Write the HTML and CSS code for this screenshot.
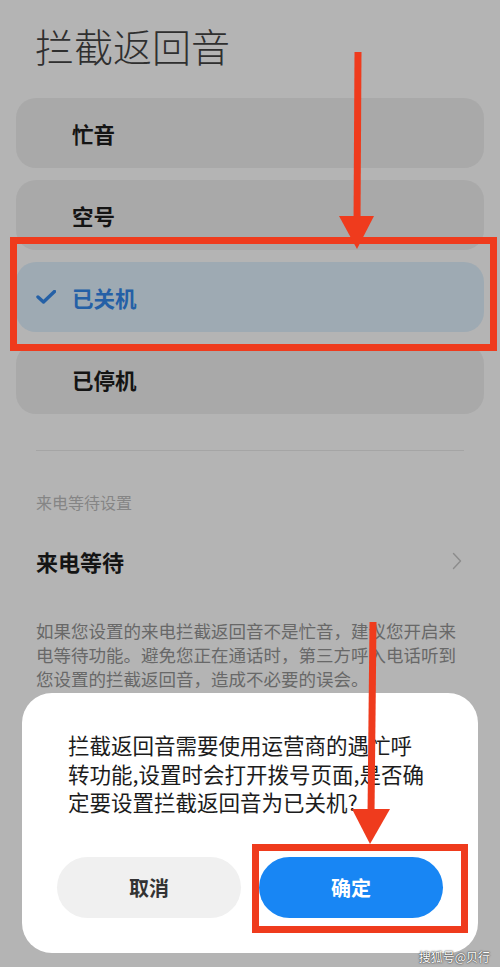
FILE: index.html
```html
<!DOCTYPE html>
<html lang="zh-CN">
<head>
    <meta charset="UTF-8">
    <meta name="viewport" content="width=device-width, initial-scale=1.0">
    <title>拦截返回音</title>
    <link rel="stylesheet" href="styles.css">
</head>
<body>
    <div class="screen">
        <h1 class="title">拦截返回音</h1>

        <ul class="options">
            <li class="option">
                <span class="check"></span>
                <span class="option-name">忙音</span>
            </li>
            <li class="option">
                <span class="check"></span>
                <span class="option-name">空号</span>
            </li>
            <li class="option selected">
                <span class="check">
                    <svg width="20" height="14" viewBox="0 0 20 14">
                        <path d="M2 7 L7.5 12 L18.5 1.5" fill="none" stroke="#2460a6" stroke-width="3.4" stroke-linecap="round" stroke-linejoin="round"/>
                    </svg>
                </span>
                <span class="option-name">已关机</span>
            </li>
            <li class="option">
                <span class="check"></span>
                <span class="option-name">已停机</span>
            </li>
        </ul>

        <div class="divider"></div>

        <div class="section-label">来电等待设置</div>
        <div class="setting-row">
            <span>来电等待</span>
            <svg class="chevron" width="10" height="18" viewBox="0 0 10 18">
                <path d="M1.5 1.5 L8.5 9 L1.5 16.5" fill="none" stroke="#8c8c8c" stroke-width="1.4" stroke-linecap="round" stroke-linejoin="round"/>
            </svg>
        </div>
        <p class="hint">如果您设置的来电拦截返回音不是忙音，建议您开启来电等待功能。避免您正在通话时，第三方呼入电话听到您设置的拦截返回音，造成不必要的误会。</p>

        <!-- confirm dialog -->
        <div class="dialog">
            <p class="dialog-text">拦截返回音需要使用运营商的遇忙呼转功能,设置时会打开拨号页面,是否确定要设置拦截返回音为已关机?</p>
            <div class="dialog-buttons">
                <button class="btn btn-cancel">取消</button>
                <button class="btn btn-ok">确定</button>
            </div>
        </div>

        <!-- red markers on top -->
        <svg class="marks" width="500" height="967" viewBox="0 0 500 967">
            <g fill="none" stroke="#ef3b1d" stroke-width="7">
                <rect x="13.5" y="240.5" width="480" height="107"/>
                <rect x="255.5" y="847.5" width="209" height="82"/>
                <line x1="358" y1="52" x2="357" y2="222"/>
                <line x1="373" y1="622" x2="371" y2="815"/>
            </g>
            <g fill="#ef3b1d">
                <polygon points="339,216 374,216 357,249"/>
                <polygon points="352,809 390,809 370,844"/>
            </g>
        </svg>

        <div class="watermark">搜狐号@贝行</div>
    </div>
</body>
</html>
```

FILE: styles.css
```css
body {
    margin: 0;
    padding: 0;
    background-color: #b4b4b4;
    font-family: 'Noto Sans CJK SC', 'Noto Sans', sans-serif;
}
.screen {
    position: relative;
    width: 500px;
    height: 967px;
    overflow: hidden;
    padding: 26px 16px 0;
    box-sizing: border-box;
}
.title {
    margin: 0 0 0 19px;
    font-size: 39px;
    line-height: 39px;
    font-weight: 300;
    color: #2f2f2f;
}
.options {
    list-style: none;
    margin: 33px 0 0;
    padding: 0;
}
.option {
    display: flex;
    align-items: center;
    height: 70px;
    margin-bottom: 12px;
    padding-left: 20px;
    border-radius: 20px;
    background-color: #a9a9a9;
    font-size: 21.5px;
    font-weight: 700;
    color: #141414;
}
.option.selected {
    background-color: #9eaab3;
    color: #2460a6;
}
.check {
    display: flex;
    width: 20px;
    margin-right: 16px;
}
.divider {
    height: 1px;
    margin: 36px 20px 0;
    background-color: #a5a5a5;
}
.section-label {
    margin: 40px 20px 0;
    font-size: 16px;
    line-height: 22px;
    color: #858585;
}
.setting-row {
    display: flex;
    align-items: center;
    justify-content: space-between;
    height: 30px;
    margin: 33px 20px 0;
    font-size: 22px;
    font-weight: 700;
    color: #141414;
}
.chevron {
    margin-right: 2px;
}
.hint {
    margin: 43px 20px 0;
    font-size: 17.5px;
    line-height: 24px;
    color: #686868;
}
.dialog {
    position: absolute;
    top: 693px;
    left: 22px;
    width: 456px;
    height: 260px;
    box-sizing: border-box;
    padding: 38px 35px 0;
    border-radius: 30px;
    background-color: #fff;
}
.dialog-text {
    width: 364px;
    margin: 0 0 0 11px;
    font-size: 21.5px;
    line-height: 28.5px;
    color: #1c1c1c;
}
.dialog-buttons {
    display: flex;
    gap: 18px;
    margin-top: 40px;
}
.btn {
    flex: 1;
    height: 61px;
    border: none;
    border-radius: 31px;
    font-family: inherit;
    font-size: 20px;
    font-weight: 700;
}
.btn-cancel {
    background-color: #f0f0f0;
    color: #333;
}
.btn-ok {
    background-color: #1886f4;
    color: #fff;
}
.marks {
    position: absolute;
    top: 0;
    left: 0;
}
.watermark {
    position: absolute;
    right: 10px;
    bottom: 2px;
    font-size: 12px;
    line-height: 16px;
    color: #fff;
    text-shadow: 0 0 2px #333, 0 0 1px #333;
}
```
